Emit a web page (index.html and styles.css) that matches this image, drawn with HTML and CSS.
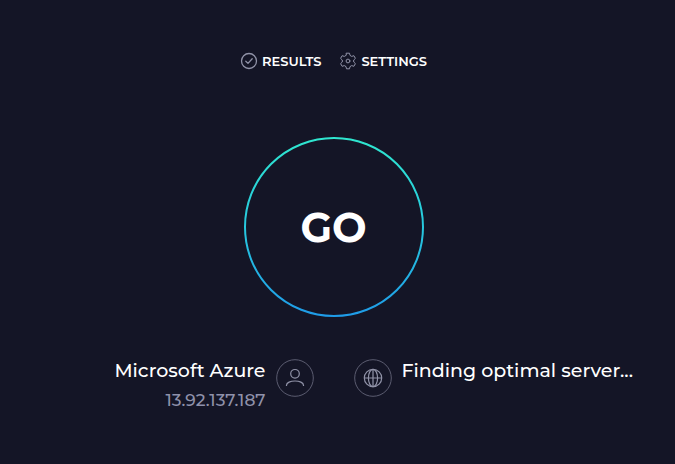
FILE: index.html
```html
<!DOCTYPE html>
<html lang="en">
<head>
  <meta charset="utf-8">
  <meta name="viewport" content="width=device-width, initial-scale=1">
  <title>Speed test</title>
  <link rel="stylesheet" href="styles.css">
</head>
<body>
  <main class="page">
    <nav class="nav">
      <a class="nav-link" href="#results">
        <svg class="nav-icon" viewBox="0 0 18 18" aria-hidden="true">
          <circle cx="9" cy="9" r="7.5"/>
          <path d="M5.8 9.3 8 11.4 12.2 6.8"/>
        </svg>
        Results
      </a>
      <a class="nav-link" href="#settings">
        <svg class="nav-icon nav-icon-gear" viewBox="0 0 18 18" aria-hidden="true">
          <path d="M7.5 1.200h3l.5 2.200 1.700 1 2.200-.7 1.500 2.700-1.700 1.600v2l1.700 1.600-1.500 2.700-2.200-.7-1.700 1-.5 2.200h-3l-.5-2.200-1.700-1-2.200.7-1.500-2.700L3.300 10V8L1.600 6.400l1.500-2.700 2.200.7 1.700-1z"/>
          <circle cx="9" cy="9" r="1.900"/>
        </svg>
        Settings
      </a>
    </nav>

    <button class="go" type="button">
      <svg class="go-ring" viewBox="0 0 180 180" aria-hidden="true">
        <defs>
          <linearGradient id="ring" x1="0" y1="0" x2="0" y2="1">
            <stop offset="0" stop-color="#2fe6cf"/>
            <stop offset="0.5" stop-color="#27c8de"/>
            <stop offset="1" stop-color="#1f9ce8"/>
          </linearGradient>
        </defs>
        <circle cx="90" cy="90" r="89" stroke="url(#ring)"/>
      </svg>
      <span class="go-label">GO</span>
    </button>

    <div class="hosts">
      <section class="host host-client">
        <div class="host-text">
          <div class="host-name">Microsoft Azure</div>
          <div class="host-detail">13.92.137.187</div>
        </div>
        <svg class="host-icon" viewBox="0 0 38 38" aria-hidden="true">
          <circle class="host-rim" cx="19" cy="19" r="18.300"/>
          <circle cx="19" cy="14.800" r="4.300"/>
          <path d="M10.500 27v-.800c0-2.600 4-4.200 8.500-4.200s8.500 1.600 8.500 4.200v.800"/>
        </svg>
      </section>
      <section class="host">
        <svg class="host-icon" viewBox="0 0 38 38" aria-hidden="true">
          <circle class="host-rim" cx="19" cy="19" r="18.300"/>
          <circle cx="19" cy="19" r="8.700"/>
          <ellipse cx="19" cy="19" rx="4.600" ry="8.700"/>
          <path d="M19 10.300v17.400M10.300 19h17.400"/>
        </svg>
        <div class="host-text">
          <div class="host-name">Finding optimal server...</div>
        </div>
      </section>
    </div>
  </main>
</body>
</html>
```
FILE: styles.css
```css
* {
  box-sizing: border-box;
}

body {
  margin: 0;
  background: #141526;
  color: #fff;
  font-family: Montserrat, Inter, "Liberation Sans", sans-serif;
}

.page {
  display: flex;
  flex-direction: column;
  align-items: center;
  min-height: 100vh;
  padding: 52px 8px 0 0;
}

.nav {
  display: flex;
  gap: 18px;
}

.nav-link {
  display: flex;
  align-items: center;
  gap: 4px;
  color: #fff;
  font-size: 13px;
  font-weight: 600;
  line-height: 18px;
  text-decoration: none;
  text-transform: uppercase;
}

.nav-icon {
  width: 18px;
  height: 18px;
  fill: none;
  stroke: #9193a8;
  stroke-width: 1.3;
  stroke-linecap: round;
  stroke-linejoin: round;
}

.nav-icon-gear {
  stroke-width: 1;
}

.go {
  display: grid;
  place-items: center;
  width: 180px;
  height: 180px;
  margin-top: 67px;
  padding: 0;
  border: 0;
  border-radius: 50%;
  background: none;
  color: #fff;
  font: inherit;
  cursor: pointer;
}

.go-ring,
.go-label {
  grid-area: 1 / 1;
}

.go-ring {
  width: 180px;
  height: 180px;
  fill: none;
  stroke-width: 2;
}

.go-label {
  font-size: 41px;
  font-weight: 700;
  line-height: 48px;
}

.hosts {
  display: grid;
  grid-template-columns: 1fr 1fr;
  gap: 40px;
  width: 100%;
  margin-top: 42px;
}

.host {
  display: flex;
  align-items: flex-start;
  gap: 10px;
  white-space: nowrap;
}

.host-client {
  justify-content: flex-end;
  text-align: right;
}

.host-icon {
  flex: none;
  width: 38px;
  height: 38px;
  fill: none;
  stroke: #9193a8;
  stroke-width: 1.2;
}

.host-rim {
  stroke: #5b5c70;
  stroke-width: 1;
}

.host-name {
  font-size: 19px;
  font-weight: 500;
  line-height: 24px;
}

.host-detail {
  margin-top: 5px;
  color: #8f91aa;
  font-size: 17px;
  font-weight: 500;
  line-height: 24px;
}
```
